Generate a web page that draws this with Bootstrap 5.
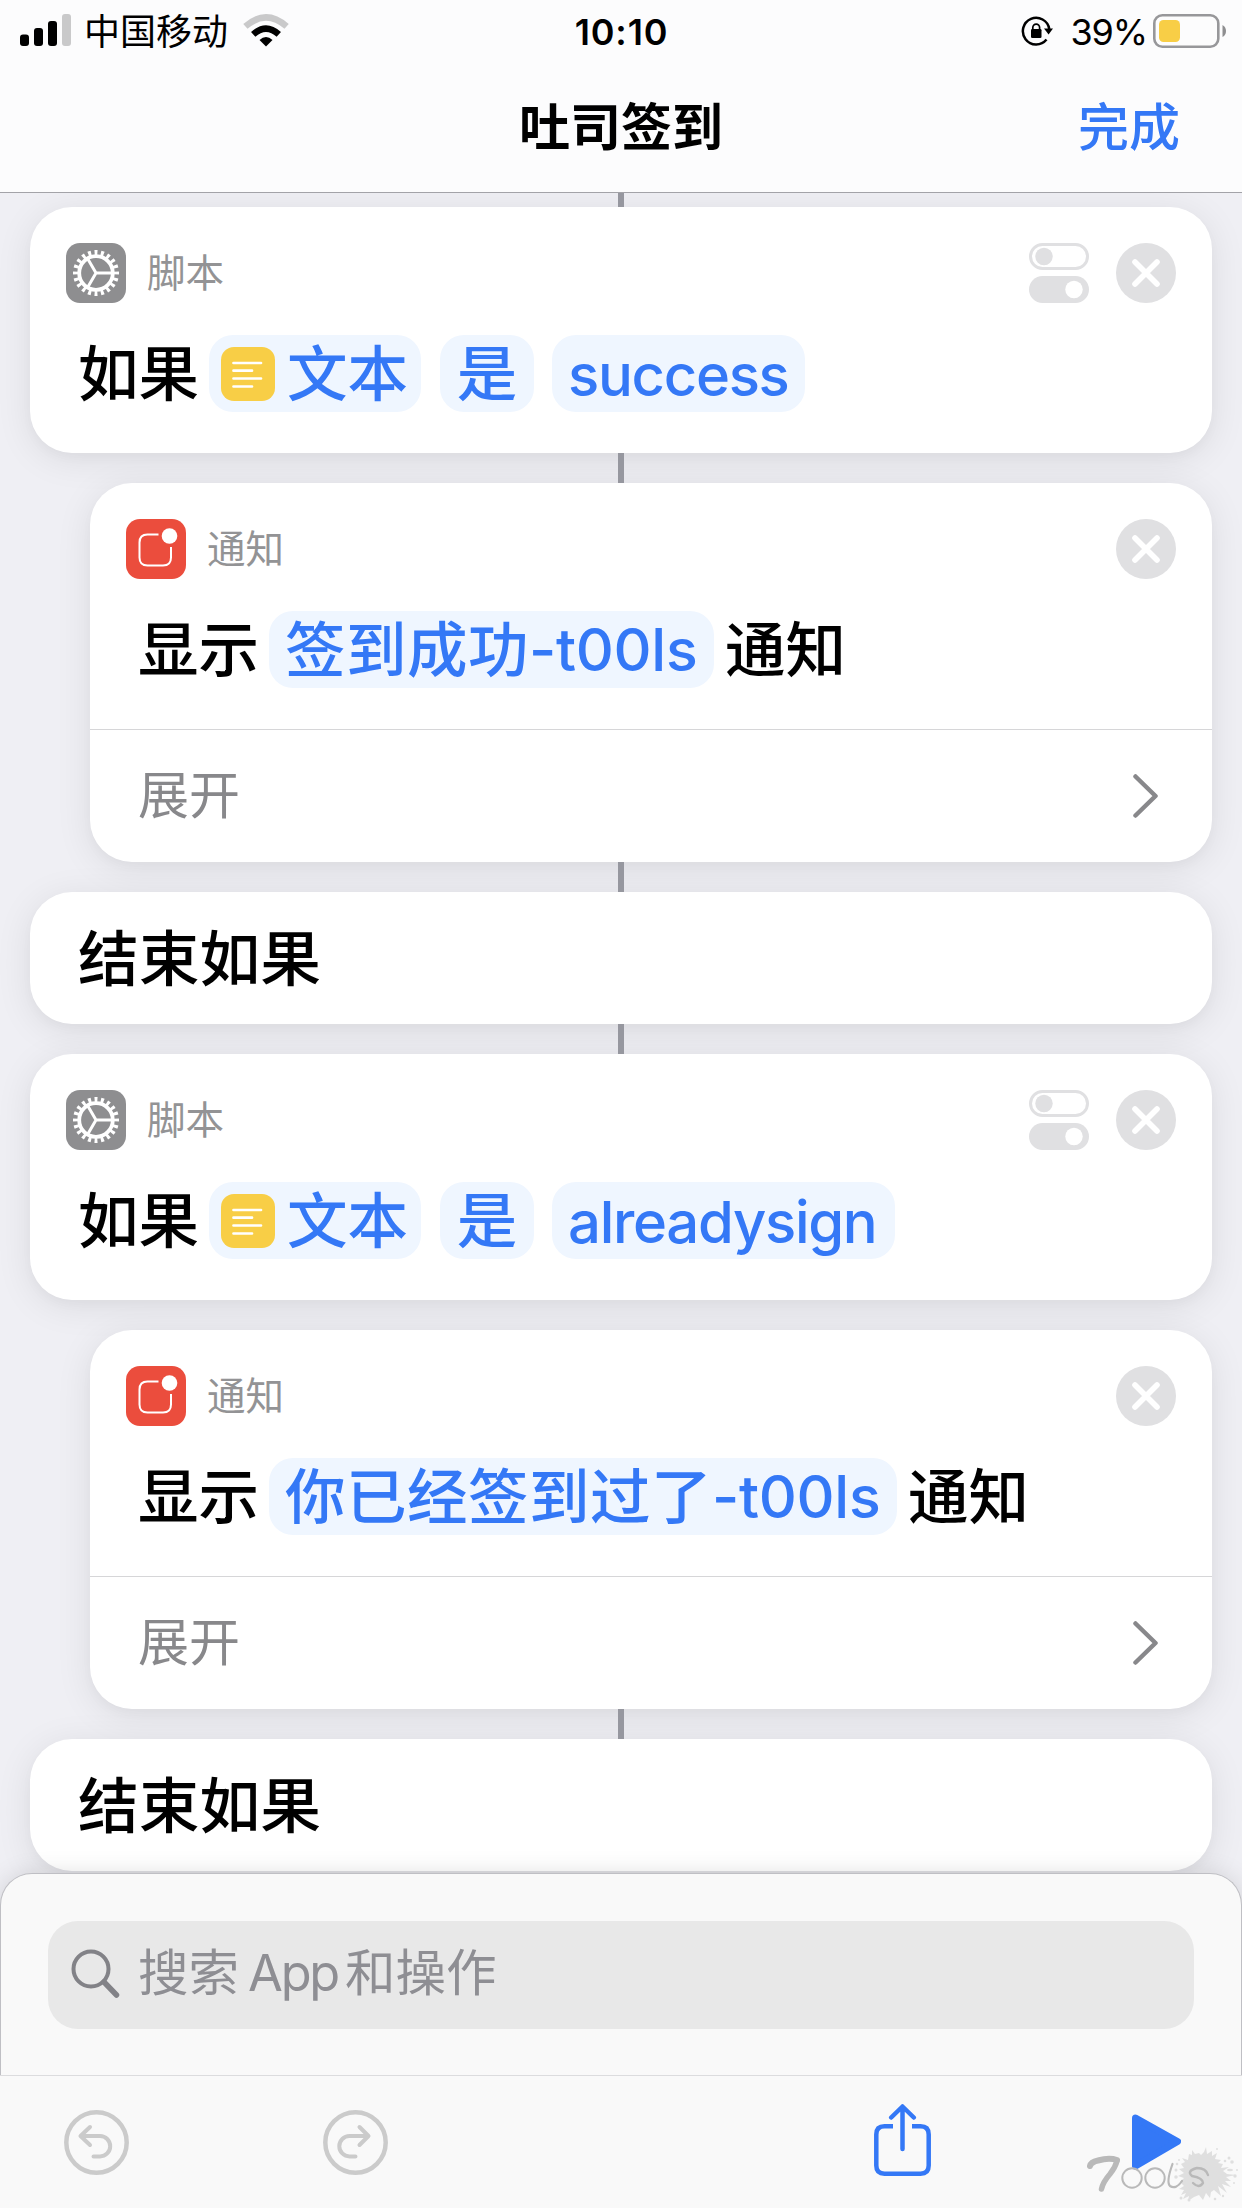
<!DOCTYPE html>
<html lang="zh-CN">
<head>
<meta charset="utf-8">
<meta name="viewport" content="width=device-width, initial-scale=1">
<title>吐司签到</title>
<link href="https://cdn.jsdelivr.net/npm/bootstrap@5.3.0/dist/css/bootstrap.min.css" rel="stylesheet">
<style>
  body { width: 1242px; height: 2208px; overflow: hidden; background: #efeff4; color: #000;
    font-family: Inter, "Noto Sans CJK SC", sans-serif; font-kerning: normal; }
  svg { display: block; flex: none; }
  .topbar { height: 193px; background: #fcfcfd; border-bottom: 1px solid #a3a3a8; z-index: 3; }
  .status { height: 62px; padding: 0 15px 0 20px; font-size: 36px; line-height: 62px; }
  .status > div { flex: 1 1 0; }
  .carrier { font-size: 36px; margin-left: 12px; margin-right: 15px; padding-top: 2px; }
  .clock { font-weight: 600; letter-spacing: .8px; padding-top: 2px; margin-right: 4px; }
  .percent { margin-left: 16px; margin-right: 6px; letter-spacing: -1.1px; padding-top: 1px; }
  .titlebar { height: 130px; font-size: 51px; line-height: 131px; padding: 0 62px; }
  .titlebar > * { flex: 1 1 0; }
  .page-title { font-weight: 600; font-size: 51px; }
  .accent { color: #3478f6; }
  .done { font-weight: 500; }
  .flow { height: 1680px; padding: 14px 30px 0; }
  .link { height: 30px; width: 6px; margin: 0 auto; background: #96979f; z-index: 2; }
  .link.first { height: 14px; margin-top: -14px; }
  .link.none { visibility: hidden; }
  .step { background: #fff; border-radius: 42px; box-shadow: 0 6px 36px rgba(0,0,0,.085), 0 5px 12px rgba(0,0,0,.025); }
  .nested { margin-left: 60px; }
  .step-head { height: 96px; padding: 36px 36px 0 36px; }
  .close-btn { margin-left: 27px; }
  .cat { font-size: 38.5px; line-height: 60px; color: #939395; margin-left: 21px; }
  .step-row { height: 77px; margin-top: 32px; padding-left: 48px; font-size: 60.5px; line-height: 78px; font-weight: 500; white-space: nowrap; }
  .w-if, .w-show { width: 131px; flex: none; }
  .token { background: #eff6ff; color: #3478f6; border-radius: 24px; height: 77px; flex: none; }
  .tk-text { width: 212px; padding-left: 12px; }
  .tk-text svg { margin-right: 12px; }
  .tk-is { width: 94px; margin-left: 19px; text-align: center; }
  .tk-value { margin-left: 18px; padding-left: 16px; font-size: 58px; letter-spacing: -1.3px; line-height: 80px; }
  .v1 { width: 253px; }
  .v2 { width: 343px; }
  .tk-msg { padding-left: 16px; letter-spacing: .5px; }
  .m1 { width: 445px; }
  .m2 { width: 628px; }
  .latin { font-size: 59px; letter-spacing: -.3px; vertical-align: 1px; line-height: 1; }
  .w-note { margin-left: 11px; }
  .action-if { height: 246px; }
  .action-show { height: 379px; }
  .end { height: 132px; line-height: 134px; font-size: 60.75px; font-weight: 500; padding-left: 48px; }
  .more { margin-top: 41px; height: 132px; border-top: 1px solid #d6d6d8; padding: 0 53px 0 48px; font-size: 51px; line-height: 132px; color: #88888b; }
  .sheet { height: 202px; background: #f9f9f9; border: 1px solid #bfbfc4; border-bottom: 0; border-radius: 32px 32px 0 0; padding: 47px 47px 0;
    box-shadow: 0 0 24px rgba(0,0,0,.12); z-index: 3; }
  .searchbox { height: 108px; border-radius: 30px; background: #e8e8e8; padding-left: 23px; font-size: 50.5px; line-height: 104px; color: #8e8e93; }
  .search-icon { margin-top: 28px; }
  .hint { margin-left: 17px; }
  .hint-app { margin: 0 7px 0 9px; letter-spacing: -2.2px; }
  .toolbar { height: 133px; background: #f9f9f9; border-top: 1px solid #dcdcde; z-index: 4; padding: 0 61px 0 64px; }
  .undo-btn, .redo-btn { margin-top: 34px; }
  .redo-btn { margin-left: 194px; }
  .share-btn { margin-left: auto; margin-right: 201px; margin-top: 28px; }
  .play-btn { margin-top: 38px; }
  .watermark { right: 0; bottom: 0; }
</style>
<script src="https://cdn.jsdelivr.net/npm/bootstrap@5.3.0/dist/js/bootstrap.bundle.min.js"></script>
</head>
<body class="d-flex flex-column position-relative">

<svg width="0" height="0" class="position-absolute">
  <symbol id="gear" viewBox="0 0 60 60">
    <rect width="60" height="60" rx="14" fill="#8e8e90"/>
    <g fill="none" stroke="#fff">
      <circle cx="30" cy="30" r="20.3" stroke-width="5.4" pathLength="200" stroke-dasharray="4.6 5.4" stroke-dashoffset="2.3"/>
      <circle cx="30" cy="30" r="16.8" stroke-width="3.8"/>
      <path d="M30 30H46M30 30L22 16.2M30 30L22 43.8" stroke-width="3"/>
    </g>
  </symbol>
  <symbol id="bell" viewBox="0 0 60 60">
    <rect width="60" height="60" rx="14" fill="#eb4d3d"/>
    <path d="M32.500 15.500H21.500Q13.500 15.500 13.500 23.500V38.500Q13.500 46.500 21.500 46.500H37Q45 46.500 45 38.500V28" fill="none" stroke="#fff" stroke-width="2"/>
    <circle cx="43.500" cy="17" r="7.800" fill="#fff"/>
  </symbol>
  <symbol id="close" viewBox="0 0 60 60">
    <circle cx="30" cy="30" r="30" fill="#e0e0e2"/>
    <path d="M19 19L41 41M41 19L19 41" stroke="#fff" stroke-width="5.600" stroke-linecap="round"/>
  </symbol>
  <symbol id="switches" viewBox="0 0 60 60">
    <rect x="1.500" y="1.500" width="57" height="24" rx="12" fill="none" stroke="#e0e0e2" stroke-width="3"/>
    <circle cx="15" cy="13.500" r="8.700" fill="#e0e0e2"/>
    <rect y="33" width="60" height="27" rx="13.500" fill="#e0e0e2"/>
    <circle cx="45" cy="46.500" r="8.700" fill="#fff"/>
  </symbol>
  <symbol id="note" viewBox="0 0 54 54">
    <rect width="54" height="54" rx="13" fill="#f8ce46"/>
    <path d="M12.500 16H40M12.500 23.700H31M12.500 31.500H40M12.500 39.500H31" stroke="#fff" stroke-width="2.700" stroke-linecap="round"/>
  </symbol>
  <symbol id="chevron" viewBox="0 0 26 44">
    <path d="M2.500 2.500L22.500 22L2.500 41.500" fill="none" stroke="#88888b" stroke-width="4.500" stroke-linecap="round" stroke-linejoin="round"/>
  </symbol>
</svg>

<header class="topbar flex-shrink-0 position-relative">
  <div class="status d-flex align-items-center">
    <div class="d-flex align-items-center">
      <svg width="52" height="34" viewBox="0 0 52 34">
        <rect y="20.500" width="9" height="11.500" rx="3"/><rect x="14" y="14" width="9" height="18" rx="3"/>
        <rect x="28" y="7" width="9" height="25" rx="3"/><rect x="42" y="0" width="9" height="32" rx="3" fill="#c9c9ca"/>
      </svg>
      <span class="carrier">中国移动</span>
      <svg width="46" height="34" viewBox="0 0 46 34">
        <path d="M23 32.500L16.500 26Q23 20 29.500 26Z"/>
        <path d="M10.200 20.300Q23 8.800 35.800 20.300" fill="none" stroke="#000" stroke-width="6.500"/>
        <path d="M2.400 12.400Q23 -5.600 43.600 12.400" fill="none" stroke="#c9c9ca" stroke-width="6.500"/>
      </svg>
    </div>
    <span class="clock">10:10</span>
    <div class="d-flex align-items-center justify-content-end">
      <svg width="33" height="30" viewBox="0 0 33 30">
        <path d="M28.300 13A13.300 13.300 0 1 0 25.500 23.500" fill="none" stroke="#000" stroke-width="2.500"/>
        <path d="M23 12.500H32L27.600 18.500Z"/>
        <rect x="10" y="13" width="10.500" height="9" rx="1.300"/>
        <path d="M11.800 14V11.500a3.400 3.400 0 0 1 6.800 0V14" fill="none" stroke="#000" stroke-width="1.700"/>
      </svg>
      <span class="percent">39%</span>
      <svg width="74" height="34" viewBox="0 0 74 34">
        <rect x="1.300" y="1.300" width="64" height="31.400" rx="8" fill="none" stroke="#97979a" stroke-width="2.600"/>
        <rect x="6" y="6" width="21" height="22" rx="4.500" fill="#f8ce46"/>
        <path d="M69.500 11Q73 13 73 17T69.500 23Z" fill="#8e8e90"/>
      </svg>
    </div>
  </div>
  <div class="titlebar d-flex">
    <span></span>
    <span class="page-title text-center">吐司签到</span>
    <span class="done accent text-end">完成</span>
  </div>
</header>

<main class="flow flex-shrink-0">
  <div class="link first position-relative"></div>
  <section class="step action-if">
    <div class="step-head d-flex">
      <svg width="60" height="60"><use href="#gear"/></svg><span class="cat">脚本</span>
      <svg class="ms-auto" width="60" height="60"><use href="#switches"/></svg>
      <svg class="close-btn" width="60" height="60"><use href="#close"/></svg>
    </div>
    <div class="step-row d-flex">
      <span class="w-if">如果</span>
      <span class="token tk-text d-flex align-items-center"><svg width="54" height="54"><use href="#note"/></svg>文本</span>
      <span class="token tk-is">是</span>
      <span class="token tk-value v1">success</span>
    </div>
  </section>
  <div class="link position-relative"></div>
  <section class="step nested action-show">
    <div class="step-head d-flex">
      <svg width="60" height="60"><use href="#bell"/></svg><span class="cat">通知</span>
      <svg class="ms-auto" width="60" height="60"><use href="#close"/></svg>
    </div>
    <div class="step-row d-flex">
      <span class="w-show">显示</span><span class="token tk-msg m1">签到成功<span class="latin">-t00ls</span></span><span class="w-note">通知</span>
    </div>
    <div class="more d-flex align-items-center justify-content-between"><span>展开</span><svg width="26" height="44"><use href="#chevron"/></svg></div>
  </section>
  <div class="link position-relative"></div>
  <section class="step end">结束如果</section>
  <div class="link position-relative"></div>
  <section class="step action-if">
    <div class="step-head d-flex">
      <svg width="60" height="60"><use href="#gear"/></svg><span class="cat">脚本</span>
      <svg class="ms-auto" width="60" height="60"><use href="#switches"/></svg>
      <svg class="close-btn" width="60" height="60"><use href="#close"/></svg>
    </div>
    <div class="step-row d-flex">
      <span class="w-if">如果</span>
      <span class="token tk-text d-flex align-items-center"><svg width="54" height="54"><use href="#note"/></svg>文本</span>
      <span class="token tk-is">是</span>
      <span class="token tk-value v2">alreadysign</span>
    </div>
  </section>
  <div class="link none"></div>
  <section class="step nested action-show">
    <div class="step-head d-flex">
      <svg width="60" height="60"><use href="#bell"/></svg><span class="cat">通知</span>
      <svg class="ms-auto" width="60" height="60"><use href="#close"/></svg>
    </div>
    <div class="step-row d-flex">
      <span class="w-show">显示</span><span class="token tk-msg m2">你已经签到过了<span class="latin">-t00ls</span></span><span class="w-note">通知</span>
    </div>
    <div class="more d-flex align-items-center justify-content-between"><span>展开</span><svg width="26" height="44"><use href="#chevron"/></svg></div>
  </section>
  <div class="link position-relative"></div>
  <section class="step end">结束如果</section>
</main>

<section class="sheet flex-shrink-0 position-relative">
  <div class="searchbox d-flex">
    <svg class="search-icon" width="50" height="50" viewBox="0 0 50 50"><circle cx="20" cy="20" r="17.500" fill="none" stroke="#828287" stroke-width="4"/><path d="M33 33L45.500 46" stroke="#828287" stroke-width="5.500" stroke-linecap="round"/></svg>
    <span class="hint">搜索<span class="hint-app">App</span>和操作</span>
  </div>
</section>
<footer class="toolbar flex-shrink-0 d-flex position-relative">
  <svg class="undo-btn" width="65" height="65" viewBox="0 0 65 65"><g fill="none" stroke="#cbcbcb" stroke-width="4.500" stroke-linecap="round" stroke-linejoin="round"><circle cx="32.500" cy="32.500" r="30.200"/><path d="M26 17L16.500 26L26 35M17 26H36a10.200 10.200 0 0 1 0 20.400H29.500" stroke-width="4"/></g></svg>
  <svg class="redo-btn" width="65" height="65" viewBox="0 0 65 65"><g fill="none" stroke="#cbcbcb" stroke-width="4.500" stroke-linecap="round" stroke-linejoin="round"><circle cx="32.500" cy="32.500" r="30.200"/><path d="M36.500 17L45.500 26L36.500 35M45 26H26.500a10.200 10.200 0 0 0 0 20.400H32.500" stroke-width="4"/></g></svg>
  <svg class="share-btn" width="57" height="72" viewBox="0 0 57 72"><g fill="none" stroke="#3478f6" stroke-width="4.500"><path d="M19 22.300H10.500Q2.300 22.300 2.300 30.500V61.500Q2.300 69.700 10.500 69.700H46.500Q54.700 69.700 54.700 61.500V30.500Q54.700 22.300 46.500 22.300H38"/><path d="M28.500 45V3M17.200 13.500L28.500 2.500L39.800 13.500" stroke-linecap="round" stroke-linejoin="round"/></g></svg>
  <svg class="play-btn" width="49" height="56" viewBox="0 0 49 56"><path d="M3.500 4L45.500 27.500L3.500 52Z" fill="#3478f6" stroke="#3478f6" stroke-width="7" stroke-linejoin="round"/></svg>
  <svg class="watermark position-absolute" width="160" height="68" viewBox="0 0 160 68">
    <path fill="#dfdfdf" d="M99 24L103 22L100 18L106 20L107 14L110 15L110 10L113 14L117 13L119 15L122 12L124 7L125 14L130 11L130 16L135 13L133 19L139 20L136 23L141 24L139 28L147 27L141 31L145 34L154 35L144 37L149 41L143 41L149 47L140 44L145 53L136 46L139 56L132 50L129 52L128 58L124 53L121 60L117 55L112 57L106 61L107 56L101 59L104 53L99 55L102 50L97 49L102 46L98 42L102 38L96 36L102 33L97 29L102 28Z"/>
    <g fill="#dfdfdf"><circle cx="147" cy="18" r="1.500"/><circle cx="143" cy="21" r="1.300"/><circle cx="150" cy="22" r="1.800"/><ellipse cx="148" cy="30" rx="3" ry="1.200"/><circle cx="153" cy="36" r="1.700"/><circle cx="155" cy="30" r="1"/><circle cx="94" cy="30" r="1.500"/><circle cx="95" cy="24" r="1.300"/><circle cx="94" cy="37" r="1.800"/><circle cx="97" cy="20" r="1"/><circle cx="99" cy="58" r="1.500"/><circle cx="107" cy="60" r="1.500"/><circle cx="133" cy="59" r="1.300"/><circle cx="141" cy="56" r="1.200"/><circle cx="135" cy="9" r="1"/><circle cx="152" cy="43" r="1"/></g>
    <g fill="none" stroke="#b9b9b9" stroke-linecap="round" stroke-linejoin="round">
      <path d="M8 26Q9 22 16 20.500Q27 17.500 35 20" stroke-width="6"/>
      <path d="M35 21Q33 28 28 34Q21 42 19.500 49" stroke-width="5.500"/>
      <circle cx="50" cy="38" r="9.700" stroke-width="2"/><circle cx="73" cy="38" r="9.700" stroke-width="2"/>
      <path d="M90.500 24Q84 42 88 46Q94 50 100 41" stroke-width="2.200"/>
      <path d="M126 35Q124 28 115 28Q104 31 110 36Q121 38 121 43Q117 49 111 43" stroke-width="2.400"/>
    </g>
  </svg>
</footer>
</body>
</html>
